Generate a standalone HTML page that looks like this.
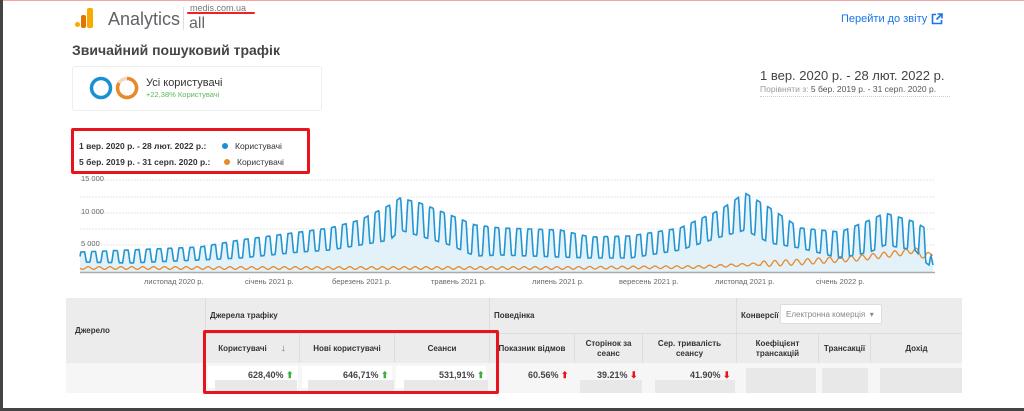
<!DOCTYPE html>
<html><head><meta charset="utf-8"><style>
*{margin:0;padding:0;box-sizing:border-box}
body{width:1024px;height:411px;background:#fff;position:relative;overflow:hidden;font-family:"Liberation Sans",sans-serif;color:#333}
.a{position:absolute;white-space:nowrap}
.tb{position:absolute;font-size:8px;font-weight:bold;color:#333;display:flex;align-items:center;justify-content:center;text-align:center;line-height:10px}
</style></head><body>
<div class="a" style="left:0;top:0;width:1024px;height:1px;background:#f3a3a3"></div>
<div class="a" style="left:0;top:0;width:3px;height:411px;background:#444"></div>
<div class="a" style="left:0;top:408px;width:1024px;height:3px;background:#444"></div>
<!-- logo -->
<div class="a" style="left:75px;top:22px;width:5px;height:5px;border-radius:50%;background:#f9ab00"></div>
<div class="a" style="left:81px;top:15px;width:5px;height:13px;border-radius:2px;background:#e37400"></div>
<div class="a" style="left:87px;top:8px;width:6px;height:20px;border-radius:2px;background:#f9ab00"></div>
<div class="a" style="left:108px;top:9px;font-size:18px;color:#5f6368">Analytics</div>
<div class="a" style="left:183px;top:7px;width:1px;height:23px;background:#ddd"></div>
<div class="a" style="left:190px;top:3px;font-size:9px;color:#777">medis.com.ua</div>
<div class="a" style="left:187px;top:12px;width:68px;height:2px;background:#e22;border-radius:1px"></div>
<div class="a" style="left:189px;top:15px;font-size:16px;color:#666">all</div>
<div class="a" style="left:72px;top:42px;font-size:14px;font-weight:bold;color:#444">Звичайний пошуковий трафік</div>
<div class="a" style="left:72px;top:66px;width:250px;height:45px;border:1px solid #eee;border-radius:3px"></div>
<svg class="a" style="left:88px;top:75px" width="54" height="28"><circle cx="13" cy="13" r="9.5" fill="none" stroke="#1a8fd1" stroke-width="3.5"/><circle cx="39" cy="13" r="9.5" fill="none" stroke="#f5d7bd" stroke-width="3.5"/><path d="M39 3.5 A9.5 9.5 0 1 1 31 8" fill="none" stroke="#e8892b" stroke-width="3.5"/></svg>
<div class="a" style="left:146px;top:77px;font-size:11px;color:#333">Усі користувачі</div>
<div class="a" style="left:146px;top:90px;font-size:7.5px;color:#5cb85c">+22,38% Користувачі</div>
<div class="a" style="left:841px;top:13px;font-size:11px;color:#1a73e8">Перейти до звіту</div>
<svg class="a" style="left:931px;top:13px" width="12" height="12"><path d="M5 1.5H1.5V10.5H10.5V7" fill="none" stroke="#1a73e8" stroke-width="1.6"/><path d="M6.5 1H11V5.5M11 1L5.5 6.5" fill="none" stroke="#1a73e8" stroke-width="1.6"/></svg>
<div class="a" style="left:760px;top:68px;font-size:13px;color:#444">1 вер. 2020 р. - 28 лют. 2022 р.</div>
<div class="a" style="left:760px;top:84px;font-size:8.5px;color:#999">Порівняти з: <span style="color:#555">5 бер. 2019 р. - 31 серп. 2020 р.</span></div>
<div class="a" style="left:760px;top:96px;width:190px;height:1px;border-top:1px dotted #ccc"></div>
<!-- legend -->
<div class="a" style="left:71px;top:128px;width:239px;height:46px;border:3px solid #e8141c;border-radius:2px"></div>
<div class="a" style="left:79px;top:141px;font-size:8.5px;font-weight:bold;color:#333">1 вер. 2020 р. - 28 лют. 2022 р.:</div>
<div class="a" style="left:222px;top:143px;width:6px;height:6px;border-radius:50%;background:#1a8fd1"></div>
<div class="a" style="left:235px;top:141px;font-size:8.5px;color:#333">Користувачі</div>
<div class="a" style="left:79px;top:157px;font-size:8.5px;font-weight:bold;color:#333">5 бер. 2019 р. - 31 серп. 2020 р.:</div>
<div class="a" style="left:224px;top:159px;width:6px;height:6px;border-radius:50%;background:#e8892b"></div>
<div class="a" style="left:237px;top:157px;font-size:8.5px;color:#333">Користувачі</div>
<!-- chart -->
<svg id="ch" class="a" style="left:0;top:0" width="1024" height="300"></svg>
<div class="a" style="left:81px;top:174px;font-size:7.5px;color:#666">15 000</div>
<div class="a" style="left:81px;top:207px;font-size:7.5px;color:#666">10 000</div>
<div class="a" style="left:81px;top:239px;font-size:7.5px;color:#666">5 000</div>
<div class="a" style="left:144px;top:277px;font-size:7.5px;color:#666">листопад 2020 р.</div>
<div class="a" style="left:245px;top:277px;font-size:7.5px;color:#666">січень 2021 р.</div>
<div class="a" style="left:332px;top:277px;font-size:7.5px;color:#666">березень 2021 р.</div>
<div class="a" style="left:431px;top:277px;font-size:7.5px;color:#666">травень 2021 р.</div>
<div class="a" style="left:532px;top:277px;font-size:7.5px;color:#666">липень 2021 р.</div>
<div class="a" style="left:619px;top:277px;font-size:7.5px;color:#666">вересень 2021 р.</div>
<div class="a" style="left:715px;top:277px;font-size:7.5px;color:#666">листопад 2021 р.</div>
<div class="a" style="left:816px;top:277px;font-size:7.5px;color:#666">січень 2022 р.</div>
<!-- table -->
<div class="a" style="left:66px;top:298px;width:896px;height:65px;background:#ececec"></div>
<div class="a" style="left:66px;top:363px;width:896px;height:30px;background:#f6f6f6"></div>
<div class="a" style="left:205px;top:298px;width:1px;height:65px;background:#ddd"></div>
<div class="a" style="left:489px;top:298px;width:1px;height:65px;background:#ddd"></div>
<div class="a" style="left:736px;top:298px;width:1px;height:65px;background:#ddd"></div>
<div class="a" style="left:205px;top:333px;width:757px;height:1px;background:#ddd"></div>
<div class="a" style="left:299px;top:333px;width:1px;height:30px;background:#ddd"></div>
<div class="a" style="left:394px;top:333px;width:1px;height:30px;background:#ddd"></div>
<div class="a" style="left:574px;top:333px;width:1px;height:30px;background:#ddd"></div>
<div class="a" style="left:642px;top:333px;width:1px;height:30px;background:#ddd"></div>
<div class="a" style="left:818px;top:333px;width:1px;height:30px;background:#ddd"></div>
<div class="a" style="left:870px;top:333px;width:1px;height:30px;background:#ddd"></div>
<div class="a" style="left:75px;top:326px;font-size:8px;font-weight:bold">Джерело</div>
<div class="a" style="left:210px;top:311px;font-size:8px;font-weight:bold">Джерела трафіку</div>
<div class="a" style="left:494px;top:311px;font-size:8px;font-weight:bold">Поведінка</div>
<div class="a" style="left:741px;top:311px;font-size:8px;font-weight:bold">Конверсії</div>
<div class="a" style="left:780px;top:304px;width:102px;height:20px;background:#fff;border:1px solid #ddd;border-radius:2px;font-size:8px;color:#888;padding:5px 5px">Електронна комерція &nbsp;▾</div>
<div class="tb" style="left:205px;top:334px;width:94px;height:29px">Користувачі <span style="color:#777;font-weight:normal;margin-left:14px;font-size:10px">↓</span></div>
<div class="tb" style="left:300px;top:334px;width:94px;height:29px">Нові користувачі</div>
<div class="tb" style="left:395px;top:334px;width:94px;height:29px">Сеанси</div>
<div class="tb" style="left:490px;top:334px;width:84px;height:29px">Показник відмов</div>
<div class="tb" style="left:575px;top:334px;width:67px;height:29px">Сторінок за<br>сеанс</div>
<div class="tb" style="left:643px;top:334px;width:93px;height:29px">Сер. тривалість<br>сеансу</div>
<div class="tb" style="left:737px;top:334px;width:81px;height:29px">Коефіцієнт<br>трансакцій</div>
<div class="tb" style="left:819px;top:334px;width:51px;height:29px">Трансакції</div>
<div class="tb" style="left:871px;top:334px;width:91px;height:29px">Дохід</div>
<div class="a" style="left:208px;top:366px;width:90px;height:22px;background:#fff"></div>
<div class="a" style="left:302px;top:366px;width:90px;height:22px;background:#fff"></div>
<div class="a" style="left:396px;top:366px;width:90px;height:22px;background:#fff"></div>
<div class="a" style="left:215px;top:380px;width:82px;height:13px;background:#e8e8e8"></div>
<div class="a" style="left:308px;top:380px;width:86px;height:13px;background:#e8e8e8"></div>
<div class="a" style="left:404px;top:380px;width:84px;height:13px;background:#e8e8e8"></div>
<div class="a" style="left:580px;top:380px;width:62px;height:13px;background:#e8e8e8"></div>
<div class="a" style="left:655px;top:380px;width:80px;height:13px;background:#e8e8e8"></div>
<div class="a" style="left:746px;top:368px;width:70px;height:25px;background:#e8e8e8"></div>
<div class="a" style="left:822px;top:368px;width:46px;height:25px;background:#e8e8e8"></div>
<div class="a" style="left:880px;top:368px;width:82px;height:25px;background:#e8e8e8"></div>
<div class="a" style="left:248px;top:370px;font-size:9px;font-weight:bold;color:#444">628,40% <span style="color:#3cb043">⬆</span></div>
<div class="a" style="left:343px;top:370px;font-size:9px;font-weight:bold;color:#444">646,71% <span style="color:#3cb043">⬆</span></div>
<div class="a" style="left:439px;top:370px;font-size:9px;font-weight:bold;color:#444">531,91% <span style="color:#3cb043">⬆</span></div>
<div class="a" style="left:528px;top:370px;font-size:9px;font-weight:bold;color:#444">60.56% <span style="color:#e8141c">⬆</span></div>
<div class="a" style="left:597px;top:370px;font-size:9px;font-weight:bold;color:#444">39.21% <span style="color:#e8141c">⬇</span></div>
<div class="a" style="left:690px;top:370px;font-size:9px;font-weight:bold;color:#444">41.90% <span style="color:#e8141c">⬇</span></div>
<div class="a" style="left:203px;top:330px;width:296px;height:64px;border:3px solid #e8141c;border-radius:2px"></div>
<script>
(function(){
var s=document.getElementById('ch');
var B=[[80,252,262],[130,250,263],[200,247,260],[240,240,258],[300,232,252],[330,228,250],[360,220,245],[390,205,240],[400,198,230],[420,203,236],[450,215,245],[475,225,256],[500,228,255],[560,230,257],[590,237,258],[630,236,258],[680,228,250],[720,210,237],[745,193,230],[770,208,243],[800,228,248],[840,232,258],[870,220,252],[885,213,245],[915,222,250],[925,228,262],[933,265,268]];
var O=[[80,268],[560,268],[700,267],[800,262],[860,258],[900,253],[915,250],[925,257],[933,252]];
function it(a,x,k){for(var i=0;i<a.length-1;i++){if(x<=a[i+1][0]){var t=(x-a[i][0])/(a[i+1][0]-a[i][0]);return a[i][k]+(a[i+1][k]-a[i][k])*t;}}return a[a.length-1][k];}
var bp='',op='';
for(var x=80;x<=933;x+=0.5){var p=(x-80)/10.9;var f=Math.max(0,Math.min(1,0.55+1.0*Math.sin(2*Math.PI*p)));
var y=it(B,x,2)+(it(B,x,1)-it(B,x,2))*f;bp+=(x==80?'M':'L')+x+' '+y.toFixed(1);
var oy=it(O,x,1)+1.3*Math.sin(2*Math.PI*p)+(x>760?1.5*Math.sin(2*Math.PI*p):0);op+=(x==80?'M':'L')+x+' '+oy.toFixed(1);}
var h='';
[180,197,213,229,245,261].forEach(function(y){h+='<line x1="80" x2="935" y1="'+y+'" y2="'+y+'" stroke="#e6e6e6" stroke-dasharray="2 1"/>';});
h+='<path d="'+bp+'L933 272L80 272Z" fill="#e3f1f8"/>';
h+='<path d="'+op+'" fill="none" stroke="#e8892b" stroke-width="1.3"/>';
h+='<path d="'+bp+'" fill="none" stroke="#2196d3" stroke-width="1.6"/>';
h+='<line x1="80" x2="935" y1="272.5" y2="272.5" stroke="#aaa" stroke-width="1.5"/>';
s.innerHTML=h;})();
</script>
</body></html>
